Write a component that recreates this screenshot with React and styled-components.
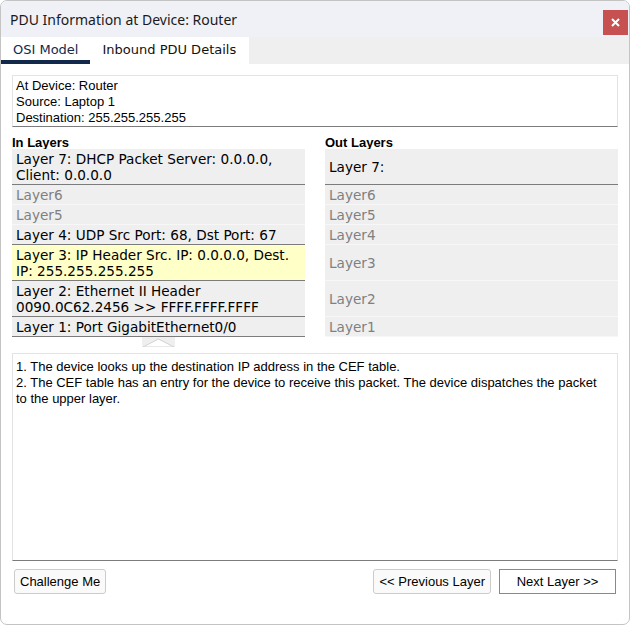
import React from "react";
import styled, { createGlobalStyle } from "styled-components";

const Global = createGlobalStyle`
  html, body { margin: 0; padding: 0; background: #ffffff; }
  * { box-sizing: border-box; }
`;

const Window = styled.div`
  width: 630px;
  height: 625px;
  border: 1px solid #c4c4c4;
  border-radius: 7px;
  overflow: hidden;
  display: flex;
  flex-direction: column;
  background: #ffffff;
`;

const TitleBar = styled.div`
  height: 36px;
  flex: none;
  background: #eff1f7;
  display: flex;
  align-items: center;
  justify-content: space-between;
  padding-left: 9px;
  padding-right: 1px;
`;

const Title = styled.div`
  font-family: "Segoe UI", "Noto Sans", sans-serif;
  font-size: 14px;
  color: #1a1a1a;
`;

const CloseButton = styled.button`
  width: 25px;
  height: 25px;
  border: none;
  background: #c75050;
  color: #ffffff;
  display: flex;
  align-items: center;
  justify-content: center;
  padding: 0;
  margin-top: 6px;
`;

const TabBar = styled.div`
  height: 27px;
  flex: none;
  background: #efefef;
  display: flex;
`;

const Tab = styled.div`
  background: #ffffff;
  height: 27px;
  padding: 2px ${(p) => p.$right}px 0 ${(p) => p.$left}px;
  display: flex;
  align-items: center;
  font-family: "DejaVu Sans", Verdana, sans-serif;
  font-size: 13px;
  color: ${(p) => (p.$active ? "#13294b" : "#111111")};
  border-bottom: 4px solid ${(p) => (p.$active ? "#13294b" : "#ffffff")};
`;

const Content = styled.div`
  flex: 1;
  display: flex;
  flex-direction: column;
  padding: 11px 11px 0 11px;
`;

const InfoBox = styled.div`
  border: 1px solid #e3e3e3;
  border-bottom: 1px solid #7c7c7c;
  padding: 2px 3px 0 3px;
  font-family: "Liberation Sans", Arial, sans-serif;
  font-size: 13px;
  line-height: 16px;
  color: #000000;
`;

const LayerGrid = styled.div`
  display: grid;
  grid-template-columns: 293px 293px;
  column-gap: 20px;
`;

const ColumnHeader = styled.div`
  font-family: "Liberation Sans", Arial, sans-serif;
  font-weight: bold;
  font-size: 13px;
  line-height: 15px;
  padding-top: 8px;
  margin-bottom: -1px;
  color: #000000;
`;

const LayerRow = styled.div`
  background: ${(p) => (p.$highlight ? "#ffffc8" : "#efefef")};
  border-bottom: 1px solid ${(p) => (p.$strong ? "#7c7c7c" : "#f7f7f7")};
  padding: ${(p) => (p.$center ? "1px 4px 1px 4px" : "2px 4px 1px 4px")};
  display: flex;
  align-items: ${(p) => (p.$center ? "center" : "flex-start")};
  font-family: "DejaVu Sans", Verdana, sans-serif;
  font-size: 13.6px;
  line-height: 16px;
  color: ${(p) => (p.$dim ? "#808080" : "#000000")};
`;

const ArrowRow = styled.div`
  width: 293px;
  display: flex;
  justify-content: center;
  height: 10px;
`;

const Description = styled.div`
  margin-top: 6px;
  height: 208px;
  border: 1px solid #e3e3e3;
  border-bottom: 1px solid #7c7c7c;
  padding: 5px 16px 5px 3px;
  font-family: "Liberation Sans", Arial, sans-serif;
  font-size: 13px;
  line-height: 16px;
  color: #000000;
`;

const ButtonRow = styled.div`
  display: flex;
  align-items: center;
  margin-top: 8px;
  padding: 0 2px;
`;

const Spacer = styled.div`
  flex: 1;
`;

const Button = styled.button`
  height: 25px;
  padding: 0 ${(p) => p.$pad}px;
  min-width: ${(p) => p.$min || 0}px;
  border: 1px solid ${(p) => (p.$focused ? "#1ab0e0" : "#cccccc")};
  border-radius: ${(p) => (p.$focused ? 0 : 3)}px;
  background: ${(p) => (p.$focused ? "#ffffff" : "#fafafa")};
  font-family: "Liberation Sans", Arial, sans-serif;
  font-size: 13px;
  color: #000000;
  margin-left: ${(p) => p.$ml || 0}px;
`;

const inLayers = [
  { text: "Layer 7: DHCP Packet Server: 0.0.0.0, Client: 0.0.0.0", strong: true },
  { text: "Layer6", dim: true },
  { text: "Layer5", dim: true },
  { text: "Layer 4: UDP Src Port: 68, Dst Port: 67", strong: true },
  { text: "Layer 3: IP Header Src. IP: 0.0.0.0, Dest. IP: 255.255.255.255", strong: true, highlight: true },
  { text: "Layer 2: Ethernet II Header 0090.0C62.2456 >> FFFF.FFFF.FFFF", strong: true, br: true },
  { text: "Layer 1: Port GigabitEthernet0/0", strong: true },
];

const outLayers = [
  { text: "Layer 7:", strong: true },
  { text: "Layer6", dim: true },
  { text: "Layer5", dim: true },
  { text: "Layer4", dim: true },
  { text: "Layer3", dim: true },
  { text: "Layer2", dim: true },
  { text: "Layer1", dim: true },
];

function renderText(l) {
  if (l.br) {
    return (
      <span>
        Layer 2: Ethernet II Header
        <br />
        0090.0C62.2456 &gt;&gt; FFFF.FFFF.FFFF
      </span>
    );
  }
  return <span>{l.text}</span>;
}

export default function App() {
  const rows = [];
  for (let i = 0; i < 7; i++) {
    const a = inLayers[i];
    const b = outLayers[i];
    rows.push(
      <LayerRow key={"in" + i} $strong={a.strong} $dim={a.dim} $highlight={a.highlight}>
        {renderText(a)}
      </LayerRow>
    );
    rows.push(
      <LayerRow key={"out" + i} $center $strong={b.strong} $dim={b.dim}>
        {renderText(b)}
      </LayerRow>
    );
  }
  return (
    <>
      <Global />
      <Window>
        <TitleBar>
          <Title>PDU Information at Device: Router</Title>
          <CloseButton aria-label="Close">
            <svg width="9" height="9" viewBox="0 0 9 9">
              <path d="M1 1 L8 8 M8 1 L1 8" stroke="#ffffff" strokeWidth="2" />
            </svg>
          </CloseButton>
        </TitleBar>
        <TabBar>
          <Tab $active $left={12} $right={12}>OSI Model</Tab>
          <Tab $left={12} $right={13}>Inbound PDU Details</Tab>
        </TabBar>
        <Content>
          <InfoBox>
            At Device: Router
            <br />
            Source: Laptop 1
            <br />
            Destination: 255.255.255.255
          </InfoBox>
          <LayerGrid>
            <ColumnHeader>In Layers</ColumnHeader>
            <ColumnHeader>Out Layers</ColumnHeader>
            {rows}
          </LayerGrid>
          <ArrowRow>
            <svg width="33" height="10" viewBox="0 0 33 10">
              <rect x="0" y="0" width="33" height="10" fill="#efefef" />
              <polygon points="1,10 16.5,2 32,10" fill="#ffffff" stroke="#d2d2d2" strokeWidth="1" />
            </svg>
          </ArrowRow>
          <Description>
            1. The device looks up the destination IP address in the CEF table.
            <br />
            2. The CEF table has an entry for the device to receive this packet. The device dispatches the packet to the upper layer.
          </Description>
          <ButtonRow>
            <Button $pad={5}>Challenge Me</Button>
            <Spacer />
            <Button $pad={5}>&lt;&lt; Previous Layer</Button>
            <Button $focused $min={117} $pad={5} $ml={8}>Next Layer &gt;&gt;</Button>
          </ButtonRow>
        </Content>
      </Window>
    </>
  );
}
